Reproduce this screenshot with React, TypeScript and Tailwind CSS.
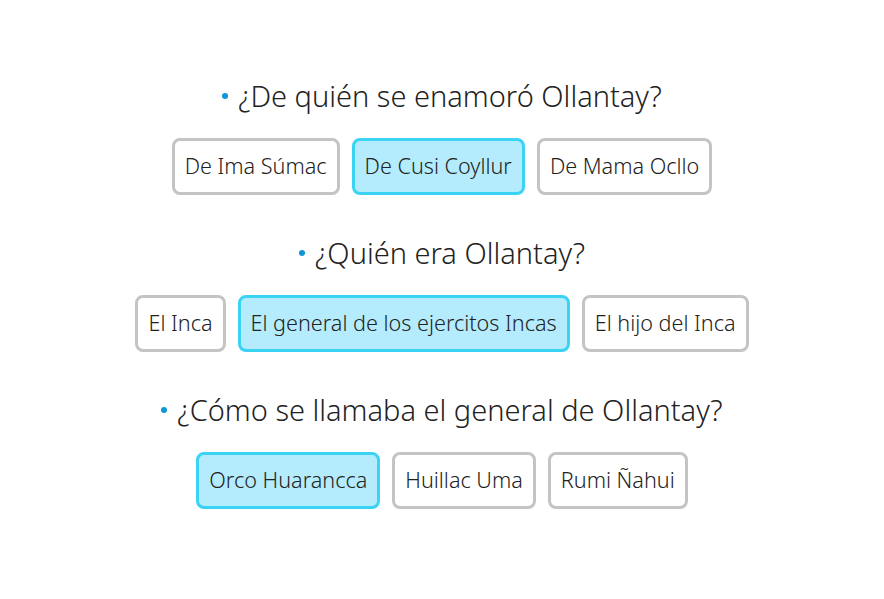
import React, { useState } from 'react';

const QUESTIONS = [
  {
    q: '¿De quién se enamoró Ollantay?',
    options: ['De Ima Súmac', 'De Cusi Coyllur', 'De Mama Ocllo'],
    picked: 1,
  },
  {
    q: '¿Quién era Ollantay?',
    options: ['El Inca', 'El general de los ejercitos Incas', 'El hijo del Inca'],
    picked: 1,
  },
  {
    q: '¿Cómo se llamaba el general de Ollantay?',
    options: ['Orco Huarancca', 'Huillac Uma', 'Rumi Ñahui'],
    picked: 0,
  },
];

const Question = ({ q, options, picked }: { q: string; options: string[]; picked: number }) => {
  const [sel, setSel] = useState(picked);
  return (
    <div className="flex flex-col items-center mb-[40px]">
      <div className="flex items-center h-[36px] mb-[24px] text-[29px] leading-[36px] font-[350] text-[#222222]">
        <span className="w-[6px] h-[6px] rounded-full bg-[#0d96d6] mr-[10px]" />
        <span>{q}</span>
      </div>
      <div className="flex gap-3">
        {options.map((o, i) => (
          <button
            key={o}
            onClick={() => setSel(i)}
            className={
              i === sel
                ? 'h-[57px] px-[10px] border-[3px] rounded-lg text-[21.6px] font-[350] text-[#222222] border-[#3ad3f4] bg-[#b4ecfd]'
                : 'h-[57px] px-[10px] border-[3px] rounded-lg text-[21.6px] font-[350] text-[#222222] border-[#c4c4c4] bg-white'
            }
          >
            {o}
          </button>
        ))}
      </div>
    </div>
  );
};

export default function App() {
  return (
    <div className="w-[884px] h-[599px] bg-white pt-[78px] font-['Noto_Sans',sans-serif]">
      {QUESTIONS.map((x) => (
        <Question key={x.q} {...x} />
      ))}
    </div>
  );
}
